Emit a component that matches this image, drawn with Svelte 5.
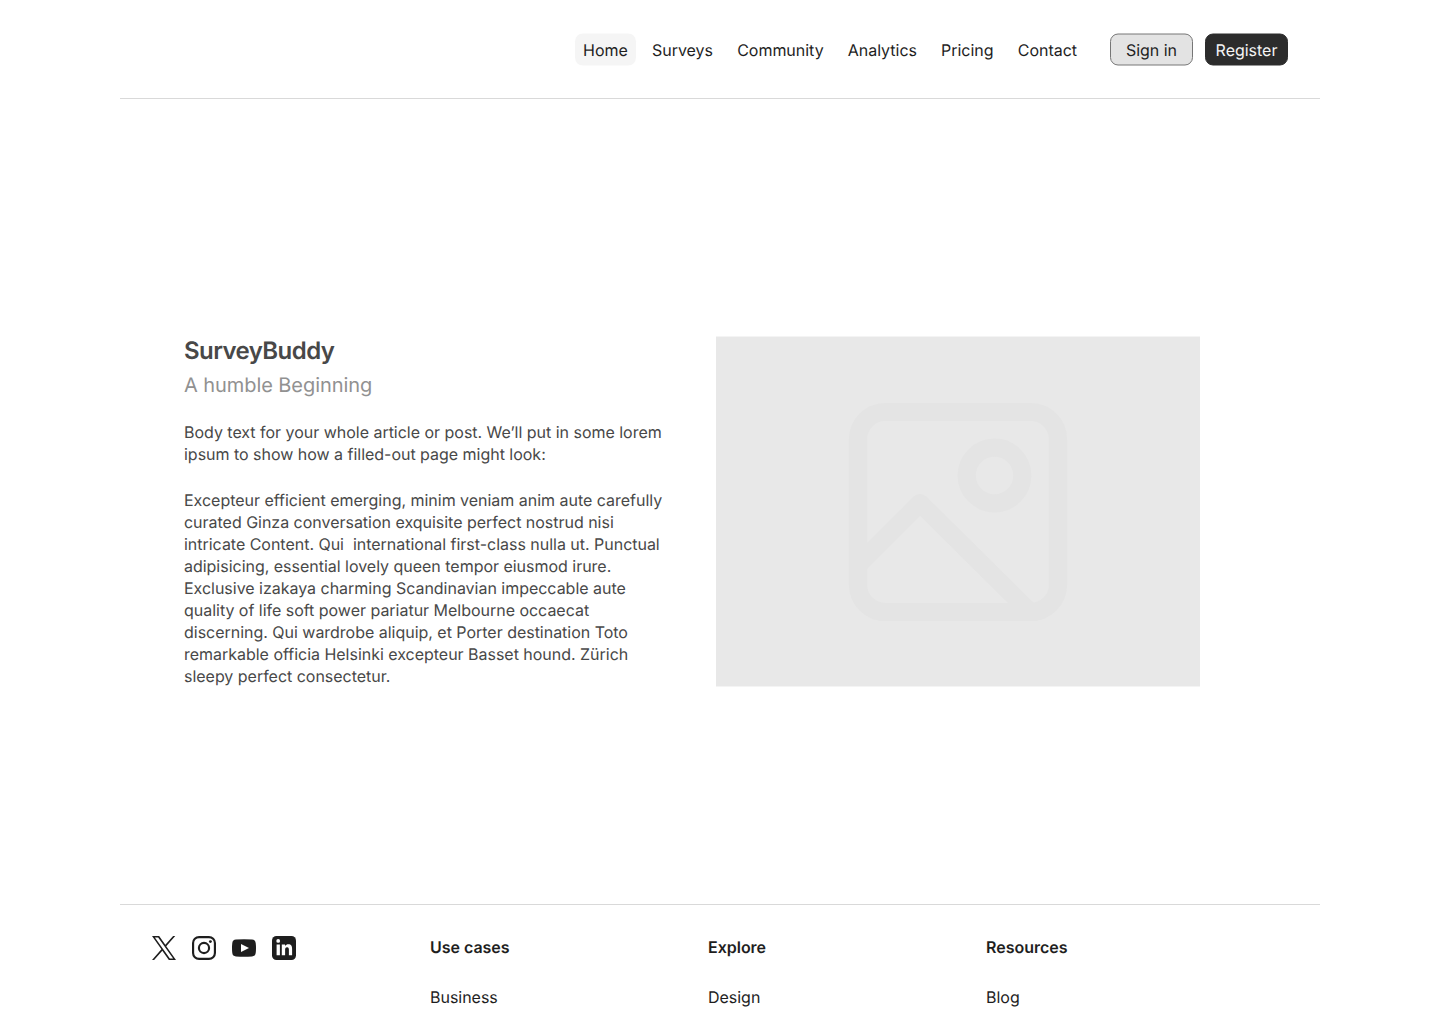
<script>
  const nav = ['Home', 'Surveys', 'Community', 'Analytics', 'Pricing', 'Contact'];
  const columns = [
    { title: 'Use cases', link: 'Business' },
    { title: 'Explore', link: 'Design' },
    { title: 'Resources', link: 'Blog' }
  ];
  const lines = [
    'Excepteur efficient emerging, minim veniam anim aute carefully',
    'curated Ginza conversation exquisite perfect nostrud nisi',
    'intricate Content. Qui  international first-class nulla ut. Punctual',
    'adipisicing, essential lovely queen tempor eiusmod irure.',
    'Exclusive izakaya charming Scandinavian impeccable aute',
    'quality of life soft power pariatur Melbourne occaecat',
    'discerning. Qui wardrobe aliquip, et Porter destination Toto',
    'remarkable officia Helsinki excepteur Basset hound. Zürich',
    'sleepy perfect consectetur.'
  ];
</script>

<div class="page">
  <header>
    <nav>
      {#each nav as item, i}
        <a class:active={i === 0} href="#top">{item}</a>
      {/each}
    </nav>
    <div class="auth">
      <button class="signin">Sign in</button>
      <button class="register">Register</button>
    </div>
  </header>

  <main>
    <article>
      <h1>SurveyBuddy</h1>
      <h2>A humble Beginning</h2>
      <p>{'Body text for your whole article or post. We’ll put in some lorem\nipsum to show how a filled-out page might look:'}</p>
      <p>{lines.join('\n')}</p>
    </article>
    <div class="picture">
      <svg width="220" height="220" viewBox="0 0 220 220" fill="none" stroke="#e4e4e4" stroke-width="18.230" stroke-linejoin="round">
        <rect x="10" y="10" width="200" height="200" rx="27.340" />
        <circle cx="146.500" cy="73.500" r="27.800" />
        <path d="M10 163L72 101L182 210" />
      </svg>
    </div>
  </main>

  <footer>
    <div class="social">
      <svg width="24" height="24" viewBox="0 0 24 24" fill="#1e1e1e"><path fill-rule="evenodd" d="M14.280 10.160L23.220 0H21.100L13.340 8.820L7.150 0H0L9.370 13.340L0 24H2.120L10.310 14.680L16.850 24H24ZM2.880 1.560H6.140L21.120 22.510H17.860Z" /></svg>
      <svg width="24" height="24" viewBox="0 0 24 24" fill="none" stroke="#1e1e1e" stroke-width="2.160"><rect x="1.080" y="1.080" width="21.840" height="21.840" rx="6" /><circle cx="12" cy="12" r="5.080" /><circle cx="18.400" cy="5.600" r="1.440" fill="#1e1e1e" stroke="none" /></svg>
      <svg width="24" height="24" viewBox="0 0 24 24" fill="#1e1e1e"><path fill-rule="evenodd" d="M4 3.600Q12 2.700 20 3.600Q23.400 3.800 23.700 7Q24.300 12 23.700 17Q23.400 20.200 20 20.400Q12 21.300 4 20.400Q.6 20.200 .3 17Q-.3 12 .3 7Q.6 3.800 4 3.600ZM9 7.900V16.100L17 12Z" /></svg>
      <svg width="24" height="24" viewBox="0 0 24 24" fill="#1e1e1e"><rect width="24" height="24" rx="4.500" /><g fill="#fff"><circle cx="6.200" cy="4.900" r="1.900" /><path d="M4.600 8.600H7.900V19.300H4.600ZM9.800 8.600H13V10.100C13.800 8.800 15 8.300 16.300 8.300C19.300 8.300 20.100 10.200 20.100 13.200V19.300H16.900V14C16.900 12.300 16.600 11.200 15.100 11.200C13.500 11.200 13.100 12.400 13.100 14V19.300H9.800Z" /></g></svg>
    </div>
    {#each columns as column}
      <section>
        <h3>{column.title}</h3>
        <a href="#top">{column.link}</a>
      </section>
    {/each}
  </footer>
</div>

<style>
  :global(body) { overflow: hidden; background: #fff; }
  .page {
    width: 1200px;
    height: 1024px;
    margin: 0 auto;
    overflow: hidden;
    font-family: Inter, sans-serif;
    font-size: 16px;
    letter-spacing: -0.020px;
    color: #1e1e1e;
    text-rendering: geometricPrecision;
  }
  a { color: inherit; text-decoration: none; }
  h1, h2, h3, p { margin: 0; }
  header {
    box-sizing: border-box;
    height: 99px;
    padding: 33px 32px 0 0;
    display: flex;
    justify-content: flex-end;
    border-bottom: 1px solid #d9d9d9;
  }
  /* Centres the 32px controls in the 99px bar. */
  nav, .auth { display: flex; transform: translateY(0.5px); }
  nav { gap: 8.150px; margin-right: 25px; }
  nav a { height: 16px; line-height: 16px; padding: 8px; }
  .active { background: #f5f5f5; border-radius: 8px; }
  .auth { gap: 12px; }
  button {
    box-sizing: border-box;
    width: 83px;
    height: 32px;
    padding: 0;
    border-radius: 8px;
    font: inherit;
    letter-spacing: inherit;
    line-height: 16px;
    text-rendering: inherit;
  }
  .signin { background: #e3e3e3; border: 1px solid #767676; color: #1e1e1e; }
  .register { background: #2c2c2c; border: 1px solid #2c2c2c; color: #f5f5f5; }
  main {
    box-sizing: border-box;
    height: 805px;
    padding: 237px 64px 0;
    display: flex;
    gap: 48px;
  }
  article { width: 484px; color: #484848; }
  h1 { font-size: 24px; line-height: 29px; font-weight: 600; letter-spacing: -0.570px; }
  h2 { font-size: 20px; line-height: 24px; margin: 8px 0 24px; font-weight: 400; letter-spacing: -0.070px; color: #919191; }
  p { line-height: 22px; margin-bottom: 24px; white-space: pre; }
  .picture {
    box-sizing: border-box;
    width: 484px;
    height: 351px;
    display: flex;
    align-items: center;
    justify-content: center;
    background: #e8e8e8;
    border: solid #f4f4f4;
    border-width: 1px 0;
  }
  footer {
    box-sizing: border-box;
    height: 120px;
    padding: 31px 32px 0;
    display: grid;
    grid-template-columns: repeat(4, 262px);
    gap: 16px;
    border-top: 1px solid #d9d9d9;
  }
  .social { display: flex; gap: 16px; }
  h3 { font-size: 16px; line-height: 22px; font-weight: 600; margin-bottom: 28px; }
  section a { display: block; line-height: 22px; }
</style>
